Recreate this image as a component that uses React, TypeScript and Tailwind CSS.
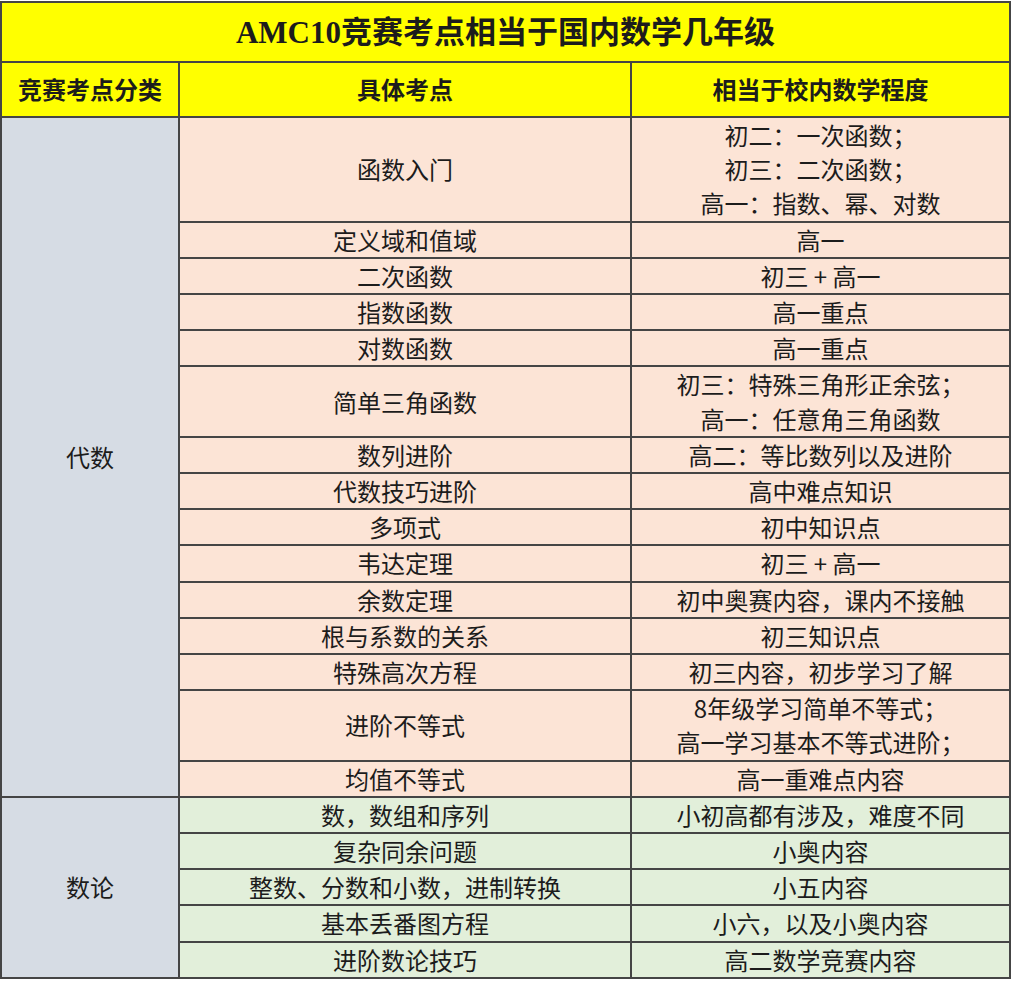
import React from 'react';

type Row = { topic: string; level: string[] };

const algebra: Row[] = [
  { topic: '函数入门', level: ['初二：一次函数；', '初三：二次函数；', '高一：指数、幂、对数'] },
  { topic: '定义域和值域', level: ['高一'] },
  { topic: '二次函数', level: ['初三 + 高一'] },
  { topic: '指数函数', level: ['高一重点'] },
  { topic: '对数函数', level: ['高一重点'] },
  { topic: '简单三角函数', level: ['初三：特殊三角形正余弦；', '高一：任意角三角函数'] },
  { topic: '数列进阶', level: ['高二：等比数列以及进阶'] },
  { topic: '代数技巧进阶', level: ['高中难点知识'] },
  { topic: '多项式', level: ['初中知识点'] },
  { topic: '韦达定理', level: ['初三 + 高一'] },
  { topic: '余数定理', level: ['初中奥赛内容，课内不接触'] },
  { topic: '根与系数的关系', level: ['初三知识点'] },
  { topic: '特殊高次方程', level: ['初三内容，初步学习了解'] },
  { topic: '进阶不等式', level: ['8年级学习简单不等式；', '高一学习基本不等式进阶；'] },
  { topic: '均值不等式', level: ['高一重难点内容'] },
];

const numberTheory: Row[] = [
  { topic: '数，数组和序列', level: ['小初高都有涉及，难度不同'] },
  { topic: '复杂同余问题', level: ['小奥内容'] },
  { topic: '整数、分数和小数，进制转换', level: ['小五内容'] },
  { topic: '基本丢番图方程', level: ['小六，以及小奥内容'] },
  { topic: '进阶数论技巧', level: ['高二数学竞赛内容'] },
];

const cell = 'border-2 border-[#454545] text-center align-middle p-0';

function Section({ name, rows, bg }: { name: string; rows: Row[]; bg: string }) {
  return (
    <>
      {rows.map((r, i) => (
        <tr key={r.topic}>
          {i === 0 && (
            <td rowSpan={rows.length} className={`${cell} bg-[#d6dce4]`}>
              {name}
            </td>
          )}
          <td className={`${cell} ${bg}`}>{r.topic}</td>
          <td className={`${cell} ${bg}`}>
            {r.level.map((l) => (
              <div key={l}>{l}</div>
            ))}
          </td>
        </tr>
      ))}
    </>
  );
}

export default function App() {
  return (
    <div className="bg-white w-[1013px] h-[981px] pt-px">
      <table
        className="w-[1011px] border-collapse text-[24px] leading-[34.2px] text-[#1c1c1c] table-fixed"
        style={{ fontFamily: '"Noto Sans CJK SC", "Noto Sans", sans-serif' }}
      >
        <colgroup>
          <col className="w-[178px]" />
          <col className="w-[452px]" />
          <col />
        </colgroup>
        <tbody>
          <tr className="h-[60px]">
            <td colSpan={3} className={`${cell} bg-[#ffff00] font-bold text-[31px]`}>
              <span style={{ fontFamily: '"Liberation Serif", serif' }}>AMC10</span>
              竞赛考点相当于国内数学几年级
            </td>
          </tr>
          <tr className="h-[55px]">
            <td className={`${cell} bg-[#ffff00] font-bold`}>竞赛考点分类</td>
            <td className={`${cell} bg-[#ffff00] font-bold`}>具体考点</td>
            <td className={`${cell} bg-[#ffff00] font-bold`}>相当于校内数学程度</td>
          </tr>
          <Section name="代数" rows={algebra} bg="bg-[#fce4d6]" />
          <Section name="数论" rows={numberTheory} bg="bg-[#e2efda]" />
        </tbody>
      </table>
    </div>
  );
}
